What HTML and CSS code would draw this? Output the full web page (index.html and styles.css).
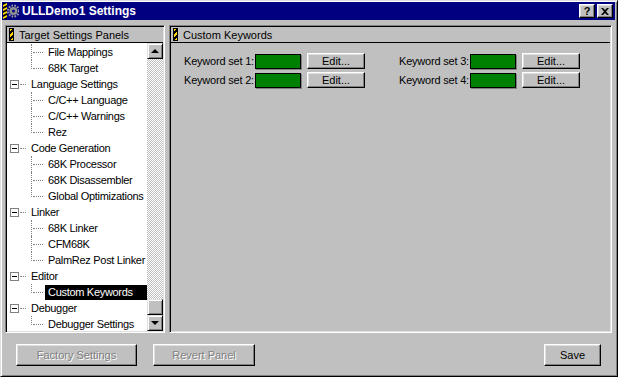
FILE: index.html
```html
<!DOCTYPE html>
<html lang="en">
<head>
    <meta charset="UTF-8">
    <meta name="viewport" content="width=device-width, initial-scale=1.0">
    <link rel="stylesheet" href="styles.css">
    <title>ULLDemo1 Settings</title>
</head>
<body>

    <div class="window">

        <div class="titlebar">
            <svg class="app-icon" width="16" height="16" viewBox="0 0 16 16">
                <rect x="0" y="0" width="4" height="16" fill="#000"/>
                <path d="M0 2 L4 0 L4 2 L0 4 Z M0 6 L4 4 L4 6 L0 8 Z M0 10 L4 8 L4 10 L0 12 Z M0 14 L4 12 L4 14 L0 16 Z" fill="#ffd800"/>
                <circle cx="10.5" cy="8" r="5.5" fill="none" stroke="#a0a0a0" stroke-width="2" stroke-dasharray="1.6 1.3"/>
                <circle cx="10.5" cy="8" r="4" fill="#909090"/>
                <circle cx="10.5" cy="8" r="1.5" fill="#000080"/>
            </svg>
            <span class="title">ULLDemo1 Settings</span>
            <div class="title-buttons">
                <div class="cap-btn">?</div>
                <div class="cap-btn">
                    <svg width="8" height="7" viewBox="0 0 8 7">
                        <path d="M0 0 L2 0 L4 2 L6 0 L8 0 L5 3.5 L8 7 L6 7 L4 5 L2 7 L0 7 L3 3.5 Z" fill="#000"/>
                    </svg>
                </div>
            </div>
        </div>

        <div class="main">

            <div class="panel panel-list">
                <div class="panel-head"><span class="stripe"></span>Target Settings Panels</div>
                <div class="list-body">
                    <div class="tree">
                        <div class="row child"><span class="label">File Mappings</span></div>
                        <div class="row child last"><span class="label">68K Target</span></div>
                        <div class="row parent"><span class="box"></span><span class="label">Language Settings</span></div>
                        <div class="row child"><span class="label">C/C++ Language</span></div>
                        <div class="row child"><span class="label">C/C++ Warnings</span></div>
                        <div class="row child last"><span class="label">Rez</span></div>
                        <div class="row parent"><span class="box"></span><span class="label">Code Generation</span></div>
                        <div class="row child"><span class="label">68K Processor</span></div>
                        <div class="row child"><span class="label">68K Disassembler</span></div>
                        <div class="row child last"><span class="label">Global Optimizations</span></div>
                        <div class="row parent"><span class="box"></span><span class="label">Linker</span></div>
                        <div class="row child"><span class="label">68K Linker</span></div>
                        <div class="row child"><span class="label">CFM68K</span></div>
                        <div class="row child last"><span class="label">PalmRez Post Linker</span></div>
                        <div class="row parent"><span class="box"></span><span class="label">Editor</span></div>
                        <div class="row child last selected"><span class="label">Custom Keywords</span></div>
                        <div class="row parent"><span class="box"></span><span class="label">Debugger</span></div>
                        <div class="row child last"><span class="label">Debugger Settings</span></div>
                    </div>
                    <div class="scrollbar">
                        <div class="sb-btn"><span class="arrow-up"></span></div>
                        <div class="sb-track"></div>
                        <div class="sb-btn"></div>
                        <div class="sb-btn"><span class="arrow-down"></span></div>
                    </div>
                </div>
            </div>

            <div class="panel panel-content">
                <div class="panel-head"><span class="stripe"></span>Custom Keywords</div>
                <div class="content">
                    <div class="kw-grid">
                        <div class="kw">
                            <span class="kw-label">Keyword set 1:</span>
                            <span class="swatch"></span>
                            <button class="btn edit-btn">Edit...</button>
                        </div>
                        <div class="kw">
                            <span class="kw-label">Keyword set 3:</span>
                            <span class="swatch"></span>
                            <button class="btn edit-btn">Edit...</button>
                        </div>
                        <div class="kw">
                            <span class="kw-label">Keyword set 2:</span>
                            <span class="swatch"></span>
                            <button class="btn edit-btn">Edit...</button>
                        </div>
                        <div class="kw">
                            <span class="kw-label">Keyword set 4:</span>
                            <span class="swatch"></span>
                            <button class="btn edit-btn">Edit...</button>
                        </div>
                    </div>
                </div>
            </div>

        </div>

        <div class="footer">
            <button class="btn factory" disabled>Factory Settings</button>
            <button class="btn revert" disabled>Revert Panel</button>
            <button class="btn save">Save</button>
        </div>

    </div>

</body>
</html>
```

FILE: styles.css
```css
* {
    box-sizing: border-box;
}

body {
    margin: 0;
    background-color: #c0c0c0;
    font-family: "Liberation Sans", Arial, sans-serif;
    font-size: 11px;
    color: #000;
}

.window {
    width: 618px;
    height: 377px;
    display: flex;
    flex-direction: column;
    background-color: #c0c0c0;
    border: 1px solid;
    border-color: #dfdfdf #000 #000 #dfdfdf;
    box-shadow: inset 1px 1px 0 #fff, inset -1px -1px 0 #808080;
    padding: 1px 2px 2px 1px;
}

/* title bar */

.titlebar {
    height: 18px;
    display: flex;
    align-items: center;
    background-color: #000080;
    color: #fff;
    padding: 0 2px 0 1px;
}

.app-icon {
    flex: none;
}

.title {
    font-weight: bold;
    font-size: 12px;
    margin-left: 3px;
}

.title-buttons {
    margin-left: auto;
    display: flex;
    gap: 2px;
}

.cap-btn {
    width: 16px;
    height: 14px;
    display: flex;
    align-items: center;
    justify-content: center;
    background-color: #c0c0c0;
    color: #000;
    font-weight: bold;
    font-size: 11px;
    border: 1px solid;
    border-color: #fff #000 #000 #fff;
    box-shadow: inset -1px -1px 0 #808080, inset 1px 1px 0 #dfdfdf;
}

/* panels */

.main {
    display: flex;
    gap: 4px;
    margin-top: 5px;
    padding-left: 3px;
    height: 308px;
}

.panel {
    display: flex;
    flex-direction: column;
    border: 1px solid;
    border-color: #808080 #fff #fff #808080;
    box-shadow: inset 1px 1px 0 #000, inset -1px -1px 0 #dfdfdf;
    padding: 1px;
}

.panel-list {
    width: 160px;
}

.panel-content {
    width: 443px;
}

.panel-head {
    height: 16px;
    flex: none;
    display: flex;
    align-items: center;
    gap: 5px;
    padding-left: 2px;
    border-bottom: 1px solid #000;
}

.stripe {
    width: 5px;
    height: 13px;
    border: 1px solid #000;
    background: repeating-linear-gradient(135deg, #ffd800 0 2px, #000 2px 4px);
}

.list-body {
    flex: 1;
    display: flex;
    background-color: #fff;
    overflow: hidden;
}

.tree {
    flex: 1;
    min-width: 0;
    overflow: hidden;
    padding-top: 1px;
}

.row {
    height: 16px;
    position: relative;
    display: flex;
    align-items: center;
    white-space: nowrap;
    letter-spacing: -0.3px;
}

.row.parent {
    padding-left: 21px;
}

.row.child {
    padding-left: 38px;
}

.label {
    padding: 0 3px;
    line-height: 15px;
}

.selected .label {
    background-color: #000;
    color: #fff;
    flex: 1;
}

.row.child::before {
    content: "";
    position: absolute;
    left: 24px;
    top: 0;
    height: 16px;
    border-left: 1px dotted #808080;
}

.row.child.last::before {
    height: 9px;
}

.row.child::after {
    content: "";
    position: absolute;
    left: 26px;
    top: 8px;
    width: 10px;
    border-top: 1px dotted #808080;
}

.row.parent::after {
    content: "";
    position: absolute;
    left: 13px;
    top: 8px;
    width: 6px;
    border-top: 1px dotted #808080;
}

.box {
    position: absolute;
    left: 3px;
    top: 4px;
    width: 9px;
    height: 9px;
    border: 1px solid #808080;
    background-color: #fff;
}

.box::after {
    content: "";
    position: absolute;
    left: 1px;
    top: 3px;
    width: 5px;
    height: 1px;
    background-color: #000;
}

/* scrollbar */

.scrollbar {
    width: 16px;
    flex: none;
    display: flex;
    flex-direction: column;
    background: repeating-conic-gradient(#c0c0c0 0 25%, #fff 0 50%) 0 0 / 2px 2px;
}

.sb-btn {
    width: 16px;
    height: 16px;
    flex: none;
    display: flex;
    align-items: center;
    justify-content: center;
    background-color: #c0c0c0;
    border: 1px solid;
    border-color: #dfdfdf #000 #000 #dfdfdf;
    box-shadow: inset 1px 1px 0 #fff, inset -1px -1px 0 #808080;
}

.sb-track {
    flex: 1;
}

.arrow-up {
    width: 0;
    height: 0;
    border-left: 4px solid transparent;
    border-right: 4px solid transparent;
    border-bottom: 4px solid #000;
}

.arrow-down {
    width: 0;
    height: 0;
    border-left: 4px solid transparent;
    border-right: 4px solid transparent;
    border-top: 4px solid #000;
}

/* keyword settings */

.content {
    flex: 1;
    padding: 10px 0 0 13px;
}

.kw-grid {
    display: grid;
    grid-template-columns: 215px 215px;
    row-gap: 3px;
}

.kw {
    display: flex;
    align-items: center;
    height: 16px;
    white-space: nowrap;
}

.kw-label {
    width: 71px;
    flex: none;
    letter-spacing: -0.2px;
}

.swatch {
    width: 46px;
    height: 15px;
    flex: none;
    background-color: #008000;
    border: 1px solid #000;
    box-shadow: 1px 1px 0 #808080;
}

.btn {
    height: 22px;
    padding: 0;
    font-family: inherit;
    font-size: 11px;
    color: #000;
    background-color: #c0c0c0;
    border: 1px solid;
    border-color: #fff #000 #000 #fff;
    box-shadow: inset -1px -1px 0 #808080, inset 1px 1px 0 #dfdfdf;
    border-radius: 0;
}

.btn:disabled {
    color: #808080;
    text-shadow: 1px 1px 0 #fff;
}

.edit-btn {
    width: 58px;
    height: 16px;
    flex: none;
    margin-left: 6px;
}

/* footer buttons */

.footer {
    display: flex;
    margin-top: 11px;
    padding: 0 14px;
}

.factory {
    width: 121px;
}

.revert {
    width: 102px;
    margin-left: 16px;
}

.save {
    width: 57px;
    margin-left: auto;
}
```
